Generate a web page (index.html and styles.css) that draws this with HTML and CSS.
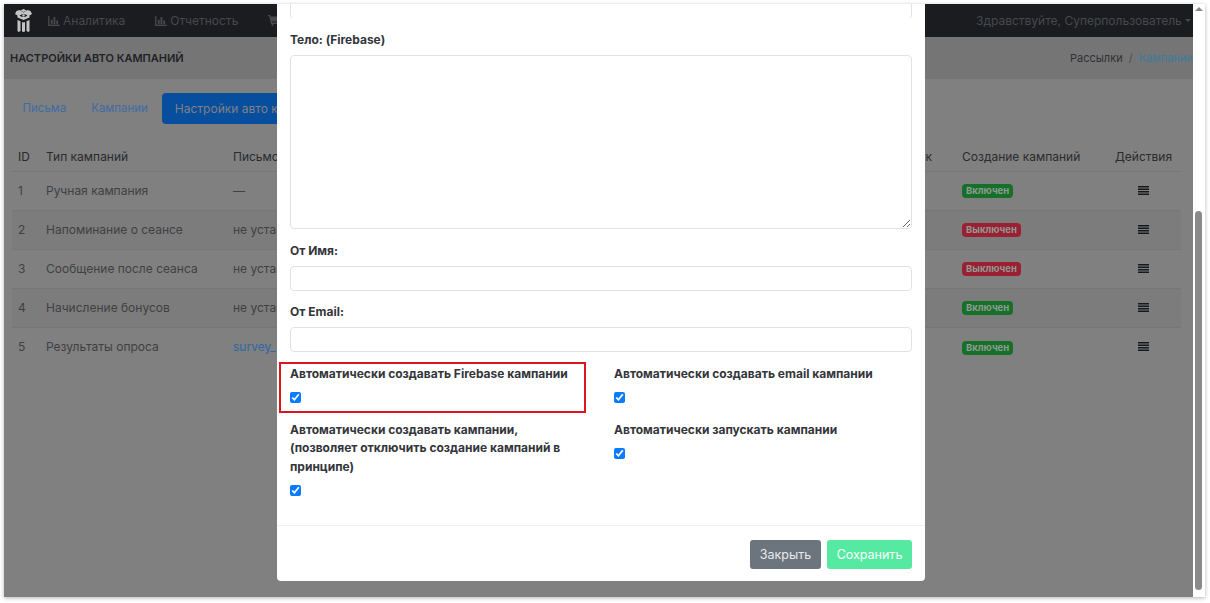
FILE: index.html
```html
<!DOCTYPE html>
<html lang="ru">
<head>
<meta charset="utf-8">
<title>Настройки авто кампаний</title>
<link rel="stylesheet" href="styles.css">
</head>
<body>
<div class="frame">
  <div class="page">
    <nav class="topbar">
      <svg class="logo" width="17" height="23" viewBox="0 0 17 23"><path fill="#c4c4c4" d="M8.500 0l3 1.500-3 1.500-3-1.500zM1.500 2l3-1 4 2.500 4-2.500 3 1 1.500 3-2.500 1.500v2l-6 2.500-6-2.500v-2L0 5zM2.500 11l3 1.300V22l-2 1-1-1zM14.500 11l-3 1.300V22l2 1 1-1zM7 13l1.500.5L10 13v9.500l-1.500.5L7 22.500z"/><path fill="#1a1c20" d="M4.500 6.500q4-3.200 8 0q-4 3-8 0z"/><circle cx="8.500" cy="6.500" r="1.200" fill="#c4c4c4"/></svg>
      <a class="nav-link"><svg class="bars" width="12" height="10" viewBox="0 0 13 11"><path d="M0 0h1.500v9.500H13V11H0zM3 4h2v5H3zM6 1h2v8H6zM9 5h2v4H9z"/></svg>Аналитика</a>
      <a class="nav-link"><svg class="bars" width="12" height="10" viewBox="0 0 13 11"><path d="M0 0h1.500v9.500H13V11H0zM3 4h2v5H3zM6 1h2v8H6zM9 5h2v4H9z"/></svg>Отчетность</a>
      <a class="nav-link"><svg class="bars" width="13" height="11" viewBox="0 0 13 11"><path d="M0 0h2.200l.4 1.500H13l-1.500 5H4l.3 1H12V9H3L1.200 1.200H0z"/><circle cx="4.500" cy="10" r="1"/><circle cx="10.500" cy="10" r="1"/></svg>Магазин</a>
      <a class="user">Здравствуйте, Суперпользователь<i class="caret"></i></a>
    </nav>
    <header class="subbar">
      <h1 class="title">НАСТРОЙКИ АВТО КАМПАНИЙ</h1>
      <div class="crumbs"><span>Рассылки</span><span class="sep">/</span><a class="crumb-link">Кампании</a></div>
    </header>
    <main class="content">
      <div class="tabs">
        <a class="tab">Письма</a>
        <a class="tab">Кампании</a>
        <a class="tab active">Настройки авто кампаний</a>
      </div>
      <table class="grid">
        <colgroup><col class="c1"><col class="c2"><col class="c3"><col class="c4"><col class="c5"><col class="c6"></colgroup>
        <thead><tr><th>ID</th><th>Тип кампаний</th><th>Письмо</th><th>Автозапуск</th><th>Создание кампаний</th><th class="center">Действия</th></tr></thead>
        <tbody>
          <tr><td>1</td><td>Ручная кампания</td><td>—</td><td></td><td><span class="badge on">Включен</span></td><td class="center"><svg class="list" width="11" height="9" viewBox="0 0 11 9"><path d="M0 0h11v1.500H0zM0 2.500h11V4H0zM0 5h11v1.500H0zM0 7.500h11V9H0z"/></svg></td></tr>
          <tr class="odd"><td>2</td><td>Напоминание о сеансе</td><td>не установлено</td><td></td><td><span class="badge off">Выключен</span></td><td class="center"><svg class="list" width="11" height="9" viewBox="0 0 11 9"><path d="M0 0h11v1.500H0zM0 2.500h11V4H0zM0 5h11v1.500H0zM0 7.500h11V9H0z"/></svg></td></tr>
          <tr><td>3</td><td>Сообщение после сеанса</td><td>не установлено</td><td></td><td><span class="badge off">Выключен</span></td><td class="center"><svg class="list" width="11" height="9" viewBox="0 0 11 9"><path d="M0 0h11v1.500H0zM0 2.500h11V4H0zM0 5h11v1.500H0zM0 7.500h11V9H0z"/></svg></td></tr>
          <tr class="odd"><td>4</td><td>Начисление бонусов</td><td>не установлено</td><td></td><td><span class="badge on">Включен</span></td><td class="center"><svg class="list" width="11" height="9" viewBox="0 0 11 9"><path d="M0 0h11v1.500H0zM0 2.500h11V4H0zM0 5h11v1.500H0zM0 7.500h11V9H0z"/></svg></td></tr>
          <tr><td>5</td><td>Результаты опроса</td><td><a class="mail-link">survey_result</a></td><td></td><td><span class="badge on">Включен</span></td><td class="center"><svg class="list" width="11" height="9" viewBox="0 0 11 9"><path d="M0 0h11v1.500H0zM0 2.500h11V4H0zM0 5h11v1.500H0zM0 7.500h11V9H0z"/></svg></td></tr>
        </tbody>
      </table>
    </main>
    <section class="modal">
      <div class="modal-body">
        <div class="clip"><input class="field shifted" type="text"></div>
        <label class="label body-label">Тело: (Firebase)</label>
        <textarea class="field area"></textarea>
        <label class="label name-label">От Имя:</label>
        <input class="field" type="text">
        <label class="label email-label">От Email:</label>
        <input class="field" type="text">
        <div class="checks">
          <div class="check"><span class="label">Автоматически создавать Firebase кампании</span><input class="box" type="checkbox" checked></div>
          <div class="check"><span class="label">Автоматически создавать email кампании</span><input class="box" type="checkbox" checked></div>
          <div class="check"><span class="label">Автоматически создавать кампании, (позволяет отключить создание кампаний в принципе)</span><input class="box" type="checkbox" checked></div>
          <div class="check"><span class="label">Автоматически запускать кампании</span><input class="box" type="checkbox" checked></div>
        </div>
      </div>
      <footer class="modal-foot">
        <button class="btn grey">Закрыть</button>
        <button class="btn green">Сохранить</button>
      </footer>
      <div class="highlight"></div>
    </section>
  </div>
  <div class="scrollbar">
    <i class="arrow"></i>
    <div class="thumb"></div>
  </div>
</div>
</body>
</html>
```
FILE: styles.css
```css
* { box-sizing: border-box; }
html, body { margin: 0; height: 100%; background: #fff; overflow: hidden; }
body { font-family: Inter, "Noto Sans", sans-serif; font-size: 12px; padding: 4px 5px 6px 4px; }
.frame { display: flex; height: 593px; box-shadow: 0 1px 4px rgba(0,0,0,.3); }
.page { position: relative; flex: 1; min-width: 0; overflow: hidden; background: #808080; }

.topbar { display: flex; align-items: center; height: 33px; background: #1a1c20; padding-left: 11px; color: #47494d; }
.logo { margin-right: 16px; }
.nav-link { display: flex; align-items: center; gap: 3px; margin-right: 30px; white-space: nowrap; }
.bars { fill: #47494d; }
.user { position: absolute; left: 972px; top: 9px; white-space: nowrap; display: flex; align-items: center; }
.caret { width: 0; height: 0; margin-left: 3px; border: 3.500px solid transparent; border-top-color: #47494d; border-bottom: 0; }

.subbar { display: flex; justify-content: space-between; align-items: center; height: 42px; background: #757575; padding-left: 6px; }
.title { margin: 0; font-size: 11px; font-weight: 600; color: #202226; }
.crumbs { display: flex; gap: 6px; width: 123px; white-space: nowrap; overflow: hidden; color: #303235; font-size: 11px; }
.sep { color: #4c4c4c; }
.crumb-link { color: #3f7c9c; }

.content { padding: 14px 8px 0; }
.tabs { display: flex; align-items: center; height: 31px; margin: 0 0 17px -2px; }
.tab { padding: 0 12.500px; font-size: 11.500px; color: #3f6ca3; line-height: 31px; white-space: nowrap; }
.tab.active { background: #084e9f; color: #808080; border-radius: 4px; font-size: 12px; margin-left: 2px; }

.grid { border-collapse: collapse; table-layout: fixed; width: 1169px; color: #3f4042; }
.c1 { width: 28px; } .c2 { width: 187px; } .c3 { width: 632px; } .c4 { width: 97px; } .c5 { width: 154px; } .c6 { width: 71px; }
.grid th { height: 30px; font-weight: 400; text-align: left; padding: 2px 6px 0; color: #2a2b2d; border-bottom: 1px solid #767676; white-space: nowrap; }
.grid td { height: 39px; padding: 0 6px; border-bottom: 1px solid #767676; white-space: nowrap; overflow: hidden; }
.grid tbody tr:last-child td { border-bottom: 0; }
.grid .center { text-align: center; padding-left: 4px; padding-right: 8px; }
.odd { background: #7c7c7c; }
.mail-link { color: #2f66a8; }
.badge { display: inline-block; padding: 2px 4px; font-size: 9.500px; font-weight: 700; line-height: 10px; border-radius: 4px; color: #8f9a92; vertical-align: middle; }
.on { background: #167029; }
.off { background: #9c2034; }
.list { fill: #17181a; vertical-align: middle; position: relative; top: -1px; }

.modal { position: absolute; left: 273px; top: 0; width: 648px; height: 577px; background: #fff; border-radius: 0 0 4px 4px; display: flex; flex-direction: column; }
.modal-body { flex: 1; padding: 0 13px; }
.clip { height: 14px; overflow: hidden; }
.shifted { margin-top: -10px; }
.label { display: block; font-size: 12px; font-weight: 700; line-height: 18.500px; color: #33353a; }
.body-label { margin-top: 13px; margin-bottom: 5px; }
.name-label { margin-top: 13px; margin-bottom: 6px; }
.email-label { margin-top: 12px; margin-bottom: 5px; }
.field { display: block; width: 100%; height: 25px; border: 1px solid #dfe3e8; border-radius: 4px; background: #fff; padding: 0 8px; outline: 0; }
.area { height: 174px; resize: vertical; }
.checks { display: grid; grid-template-columns: 324px 1fr; margin-top: 13px; }
.check { padding-right: 30px; }
.check:nth-child(1), .check:nth-child(2) { height: 56px; }
.box { display: block; width: 11px; height: 11px; margin: 9px 0 0; accent-color: #0a7bff; }

.modal-foot { display: flex; justify-content: flex-end; gap: 6px; height: 56px; padding: 14px 13px 0; border-top: 1px solid #eef0f2; }
.btn { height: 29px; border: 0; border-radius: 3px; font: 12.500px Inter, "Noto Sans", sans-serif; padding: 0 8px; color: #e8eaec; }
.grey { background: #6c757d; width: 71px; }
.green { background: #55e9a2; color: #fff; width: 85px; }

.highlight { position: absolute; left: 2px; top: 358px; width: 307px; height: 51px; border: 2px solid #e0141e; }

.scrollbar { position: relative; width: 12px; background: #fff; }
.arrow { position: absolute; left: 2px; top: 3px; width: 0; height: 0; border: 4px solid transparent; border-bottom-color: #888; border-top: 0; }
.thumb { position: absolute; left: 2px; top: 207px; width: 7px; height: 379px; background: #8a8a8a; border-radius: 4px; }
```
